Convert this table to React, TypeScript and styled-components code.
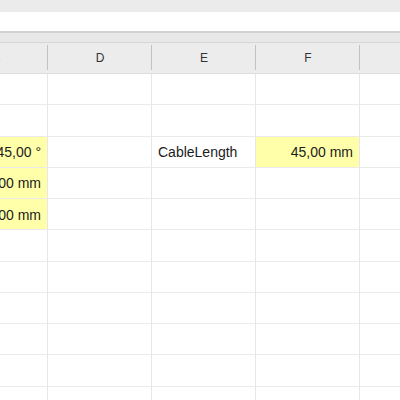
import React from "react";
import styled, { createGlobalStyle } from "styled-components";

const Global = createGlobalStyle`
  html, body { margin: 0; padding: 0; background: #ffffff; }
  body { font-family: "Liberation Sans", Arial, Helvetica, sans-serif; }
`;

const Screen = styled.div`
  width: 400px;
  height: 400px;
  overflow: hidden;
  display: flex;
  flex-direction: column;
  background: #ffffff;
`;

const TopStrip = styled.div`
  height: 12px;
  flex: none;
  background: #ebebeb;
`;

const FormulaBar = styled.div`
  height: 19px;
  flex: none;
  background: #ffffff;
  border-bottom: 2px solid #d2d2d2;
`;

const Band = styled.div`
  height: 9px;
  flex: none;
  background: #e8e8e8;
  border-bottom: 1px solid #d6d6d6;
`;

const Sheet = styled.div`
  flex: none;
  margin-left: -56px;
  display: grid;
  grid-template-columns: repeat(5, 104px);
  grid-auto-rows: 31.25px;
  grid-template-rows: 31px;
`;

const HeaderCell = styled.div`
  position: relative;
  background: #ececec;
  border-bottom: 1px solid #dedede;
  display: flex;
  align-items: center;
  justify-content: center;
  font-size: 12px;
  color: #333333;
  &::after {
    content: "";
    position: absolute;
    right: 0;
    top: 2px;
    bottom: 3px;
    width: 1px;
    background: #c2c2c2;
  }
`;

const Cell = styled.div<{ $hl?: boolean; $right?: boolean }>`
  box-sizing: border-box;
  border-right: 1px solid #e7e7e7;
  border-bottom: 1px solid #ebebeb;
  background: ${(p) => (p.$hl ? "#ffffa9" : "#ffffff")};
  display: flex;
  align-items: center;
  justify-content: ${(p) => (p.$right ? "flex-end" : "flex-start")};
  padding: 1px 6px 0;
  font-size: 14px;
  color: #1c1c1c;
  white-space: nowrap;
  overflow: hidden;
`;

type CellData = { text?: string; hl?: boolean; right?: boolean };

const cols = ["C", "D", "E", "F", "G"];

const rows: CellData[][] = [
  [{}, {}, {}, {}, {}],
  [{}, {}, {}, {}, {}],
  [
    { text: "45,00 °", hl: true, right: true },
    {},
    { text: "CableLength" },
    { text: "45,00 mm", hl: true, right: true },
    {},
  ],
  [{ text: "10,00 mm", hl: true, right: true }, {}, {}, {}, {}],
  [{ text: "10,00 mm", hl: true, right: true }, {}, {}, {}, {}],
  [{}, {}, {}, {}, {}],
  [{}, {}, {}, {}, {}],
  [{}, {}, {}, {}, {}],
  [{}, {}, {}, {}, {}],
  [{}, {}, {}, {}, {}],
  [{}, {}, {}, {}, {}],
];

export default function App() {
  return (
    <Screen>
      <Global />
      <TopStrip />
      <FormulaBar />
      <Band />
      <Sheet>
        {cols.map((c) => (
          <HeaderCell key={c}>{c}</HeaderCell>
        ))}
        {rows.map((r, ri) =>
          r.map((cell, ci) => (
            <Cell key={`${ri}-${ci}`} $hl={cell.hl} $right={cell.right}>
              {cell.text}
            </Cell>
          ))
        )}
      </Sheet>
    </Screen>
  );
}
